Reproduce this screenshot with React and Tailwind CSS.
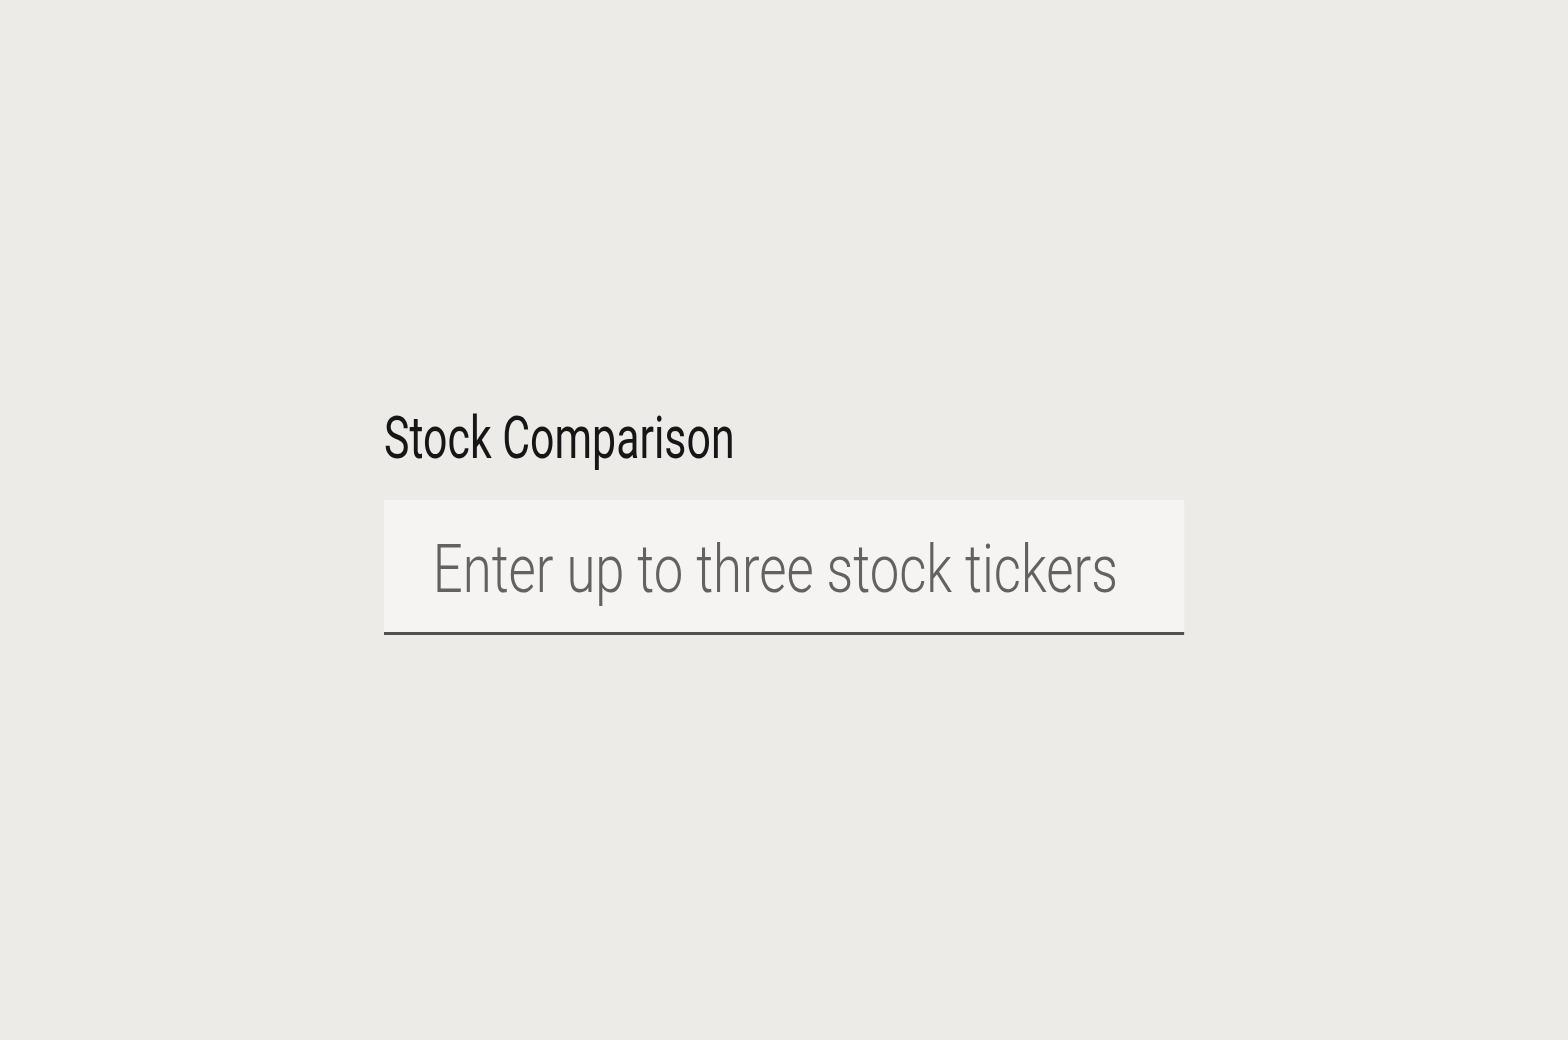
import React from "react";

export default function App() {
  return (
    <div className="min-h-screen w-full bg-[#ecebe8] flex items-center justify-center">
      <div className="w-[800px] -mt-[2px]">
        <label
          htmlFor="tickers"
          className="block origin-left scale-x-[0.726] font-[Roboto,sans-serif] font-normal text-[59px] leading-[70px] text-[#161616] whitespace-nowrap"
        >
          Stock Comparison
        </label>
        <input
          id="tickers"
          type="text"
          placeholder="Enter up to three stock tickers"
          className="mt-[27px] block w-[1018px] origin-left scale-x-[0.786] h-[135px] bg-[#f5f4f2] border-0 border-b-[3px] border-[#525150] pl-[62px] pr-0 pt-[6px] font-[Roboto,sans-serif] font-light text-[67px] text-[#161616] placeholder:text-[#636260] outline-none"
        />
      </div>
    </div>
  );
}
